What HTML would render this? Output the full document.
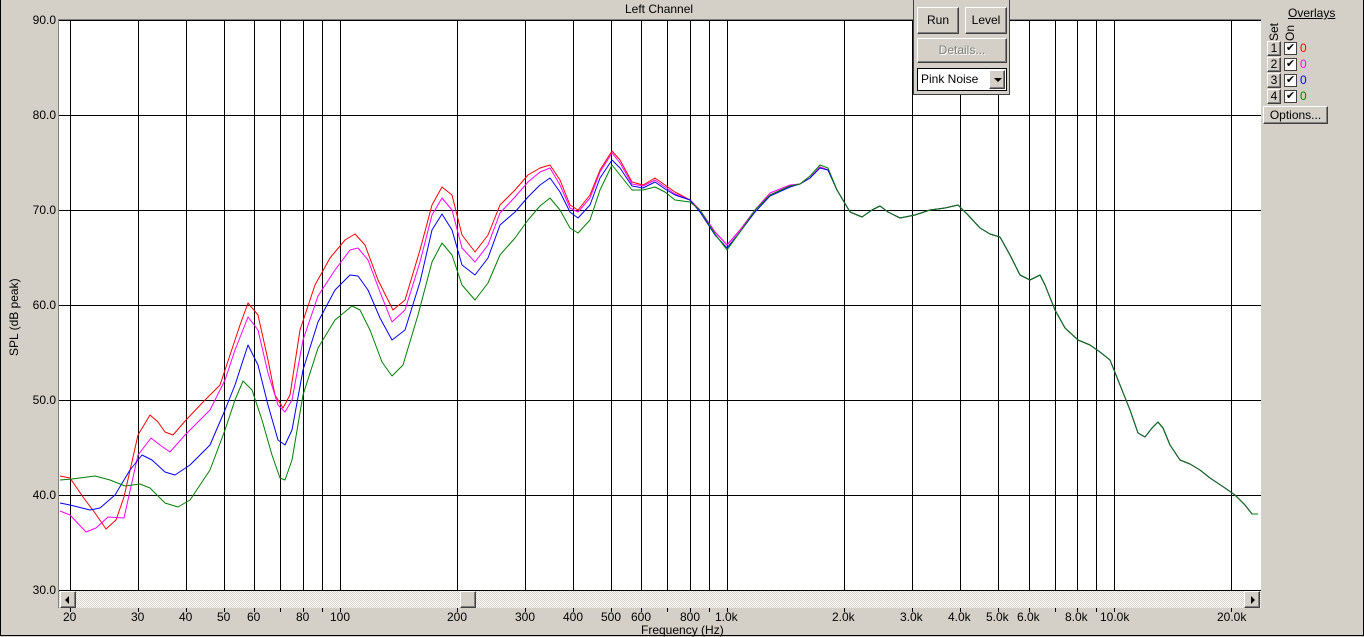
<!DOCTYPE html>
<html><head><meta charset="utf-8"><style>
html,body{margin:0;padding:0;}
body{width:1364px;height:637px;background:#d4d0c8;position:relative;overflow:hidden;font-family:"Liberation Sans",Arial,sans-serif;font-size:12px;color:#000;}
.a{position:absolute;}
.btn{position:absolute;background:#d4d0c8;border:1px solid;border-color:#fff #404040 #404040 #fff;box-shadow:inset -1px -1px 0 #808080;text-align:center;box-sizing:border-box;}
</style></head><body>
<div class="a" style="left:0;top:0;width:1362px;height:635px;border-right:1px solid #000;border-bottom:1px solid #000;border-left:1px solid #000;"></div>
<div class="a" style="left:625px;top:2px;">Left Channel</div>
<svg class="a" style="left:0;top:0" width="1364" height="637">
<rect x="59" y="20" width="1202" height="571" fill="#fff"/>
<line x1="58.5" y1="19" x2="58.5" y2="608" stroke="#808080"/>
<line x1="58" y1="19.5" x2="1261" y2="19.5" stroke="#808080"/>
<g stroke="#000" stroke-width="1" shape-rendering="crispEdges">
<line x1="59" y1="20.5" x2="1261" y2="20.5"/><line x1="59" y1="115.5" x2="1261" y2="115.5"/><line x1="59" y1="210.5" x2="1261" y2="210.5"/><line x1="59" y1="305.5" x2="1261" y2="305.5"/><line x1="59" y1="400.5" x2="1261" y2="400.5"/><line x1="59" y1="495.5" x2="1261" y2="495.5"/><line x1="59" y1="590.5" x2="1261" y2="590.5"/>
<g id="v">
<line x1="70.5" y1="20" x2="70.5" y2="590"/><line x1="138.5" y1="20" x2="138.5" y2="590"/><line x1="186.5" y1="20" x2="186.5" y2="590"/><line x1="224.5" y1="20" x2="224.5" y2="590"/><line x1="254.5" y1="20" x2="254.5" y2="590"/><line x1="280.5" y1="20" x2="280.5" y2="590"/><line x1="303.5" y1="20" x2="303.5" y2="590"/><line x1="322.5" y1="20" x2="322.5" y2="590"/><line x1="340.5" y1="20" x2="340.5" y2="590"/>
<line x1="457.5" y1="20" x2="457.5" y2="590"/><line x1="525.5" y1="20" x2="525.5" y2="590"/><line x1="573.5" y1="20" x2="573.5" y2="590"/><line x1="611.5" y1="20" x2="611.5" y2="590"/><line x1="641.5" y1="20" x2="641.5" y2="590"/><line x1="667.5" y1="20" x2="667.5" y2="590"/><line x1="690.5" y1="20" x2="690.5" y2="590"/><line x1="709.5" y1="20" x2="709.5" y2="590"/><line x1="727.5" y1="20" x2="727.5" y2="590"/>
<line x1="844.5" y1="20" x2="844.5" y2="590"/><line x1="912.5" y1="20" x2="912.5" y2="590"/><line x1="960.5" y1="20" x2="960.5" y2="590"/><line x1="998.5" y1="20" x2="998.5" y2="590"/><line x1="1029.5" y1="20" x2="1029.5" y2="590"/><line x1="1055.5" y1="20" x2="1055.5" y2="590"/><line x1="1077.5" y1="20" x2="1077.5" y2="590"/><line x1="1096.5" y1="20" x2="1096.5" y2="590"/><line x1="1114.5" y1="20" x2="1114.5" y2="590"/><line x1="1231.5" y1="20" x2="1231.5" y2="590"/>
</g>
<g transform="translate(0,588)" stroke="#000">
<line x1="70.5" y1="20" x2="70.5" y2="24"/><line x1="138.5" y1="20" x2="138.5" y2="24"/><line x1="186.5" y1="20" x2="186.5" y2="24"/><line x1="224.5" y1="20" x2="224.5" y2="24"/><line x1="254.5" y1="20" x2="254.5" y2="24"/><line x1="280.5" y1="20" x2="280.5" y2="24"/><line x1="303.5" y1="20" x2="303.5" y2="24"/><line x1="322.5" y1="20" x2="322.5" y2="24"/><line x1="340.5" y1="20" x2="340.5" y2="24"/><line x1="457.5" y1="20" x2="457.5" y2="24"/><line x1="525.5" y1="20" x2="525.5" y2="24"/><line x1="573.5" y1="20" x2="573.5" y2="24"/><line x1="611.5" y1="20" x2="611.5" y2="24"/><line x1="641.5" y1="20" x2="641.5" y2="24"/><line x1="667.5" y1="20" x2="667.5" y2="24"/><line x1="690.5" y1="20" x2="690.5" y2="24"/><line x1="709.5" y1="20" x2="709.5" y2="24"/><line x1="727.5" y1="20" x2="727.5" y2="24"/><line x1="844.5" y1="20" x2="844.5" y2="24"/><line x1="912.5" y1="20" x2="912.5" y2="24"/><line x1="960.5" y1="20" x2="960.5" y2="24"/><line x1="998.5" y1="20" x2="998.5" y2="24"/><line x1="1029.5" y1="20" x2="1029.5" y2="24"/><line x1="1055.5" y1="20" x2="1055.5" y2="24"/><line x1="1077.5" y1="20" x2="1077.5" y2="24"/><line x1="1096.5" y1="20" x2="1096.5" y2="24"/><line x1="1114.5" y1="20" x2="1114.5" y2="24"/><line x1="1231.5" y1="20" x2="1231.5" y2="24"/>
</g>
</g>
<g fill="none" stroke-width="1" stroke-linejoin="round">
<polyline stroke="#ff0000" points="60,476 70,478 83,497 95,513 106,529 116,520 124,497 138,435 150,415 158,422 165,432 173,435 186,420 205,400 220,385 230,355 240,325 248,303 258,315 268,360 275,395 283,408 290,395 300,330 315,285 330,258 345,240 355,234 365,245 378,280 393,310 405,300 420,250 432,205 442,187 452,195 462,235 475,252 488,235 500,205 515,190 528,175 540,168 550,165 560,180 570,205 578,210 590,195 600,170 612,151 620,160 632,182 643,185 655,178 665,185 675,192 690,200 700,210 715,232 727,245 740,230 755,210 770,195 790,186 800,184 810,178 820,167 828,170 837,190 850,212 862,217 872,210 880,206 888,212 900,218 915,215 930,210 945,208 958,205 968,215 980,228 990,234 1000,237 1010,255 1020,275 1030,280 1040,275 1045,285 1055,310 1065,328 1078,340 1090,345 1100,352 1110,360 1120,385 1130,410 1138,433 1145,437 1152,428 1158,422 1163,428 1170,445 1180,460 1190,464 1200,470 1210,478 1225,488 1235,495 1245,505 1252,514 1258,514"/>
<polyline stroke="#ff00ff" points="60,511 70,515 86,532 96,528 108,517 124,518 138,455 151,438 160,445 170,452 185,435 210,410 225,380 235,350 248,317 258,330 268,373 278,405 285,412 292,400 303,340 318,296 335,270 350,250 358,248 368,260 380,292 392,322 405,310 420,262 432,215 442,198 452,210 462,248 475,262 488,245 500,213 515,197 528,182 540,172 550,168 560,185 570,208 578,212 590,198 600,172 612,153 620,163 632,184 643,186 655,180 665,187 675,194 690,200 700,210 715,232 727,245 740,230 755,210 770,193 790,185 800,184 810,178 820,167 828,170 837,190 850,212 862,217 872,210 880,206 888,212 900,218 915,215 930,210 945,208 958,205 968,215 980,228 990,234 1000,237 1010,255 1020,275 1030,280 1040,275 1045,285 1055,310 1065,328 1078,340 1090,345 1100,352 1110,360 1120,385 1130,410 1138,433 1145,437 1152,428 1158,422 1163,428 1170,445 1180,460 1190,464 1200,470 1210,478 1225,488 1235,495 1245,505 1252,514 1258,514"/>
<polyline stroke="#0000ff" points="60,503 70,505 90,510 100,508 115,495 130,470 142,455 152,460 165,472 175,475 190,465 210,445 225,410 235,385 248,345 258,365 268,405 278,440 285,445 292,430 303,370 318,322 335,290 350,275 358,276 368,290 380,318 392,340 405,330 420,282 432,230 442,214 452,230 462,265 475,275 488,258 500,225 515,212 528,197 540,185 550,178 560,192 570,212 578,218 590,205 600,178 612,160 620,168 632,186 643,188 655,182 665,189 675,195 690,200 700,212 715,235 727,248 740,232 755,212 770,196 790,187 800,184 810,178 820,168 828,170 837,190 850,212 862,217 872,210 880,206 888,212 900,218 915,215 930,210 945,208 958,205 968,215 980,228 990,234 1000,237 1010,255 1020,275 1030,280 1040,275 1045,285 1055,310 1065,328 1078,340 1090,345 1100,352 1110,360 1120,385 1130,410 1138,433 1145,437 1152,428 1158,422 1163,428 1170,445 1180,460 1190,464 1200,470 1210,478 1225,488 1235,495 1245,505 1252,514 1258,514"/>
<polyline stroke="#008000" points="60,480 72,479 95,476 110,480 125,486 140,484 150,488 165,503 178,507 190,500 210,470 225,430 235,400 243,381 252,390 262,420 272,455 280,478 285,480 292,460 303,395 318,348 335,320 352,306 360,310 370,330 382,362 392,376 403,365 418,315 432,262 442,243 452,255 462,285 475,300 488,283 500,255 515,238 528,220 540,206 550,198 560,210 570,228 578,233 590,220 600,190 612,165 620,175 632,190 643,190 655,187 665,192 675,200 690,202 700,210 715,234 727,250 740,232 755,210 770,195 790,186 800,184 810,176 820,165 828,168 837,190 850,212 862,217 872,210 880,206 888,212 900,218 915,215 930,210 945,208 958,205 968,215 980,228 990,234 1000,237 1010,255 1020,275 1030,280 1040,275 1045,285 1055,310 1065,328 1078,340 1090,345 1100,352 1110,360 1120,385 1130,410 1138,433 1145,437 1152,428 1158,422 1163,428 1170,445 1180,460 1190,464 1200,470 1210,478 1225,488 1235,495 1245,505 1252,514 1258,514"/>
</g>
<defs><pattern id="h" width="2" height="2" patternUnits="userSpaceOnUse"><rect width="2" height="2" fill="#fff"/><rect width="1" height="1" fill="#d4d0c8"/><rect x="1" y="1" width="1" height="1" fill="#d4d0c8"/></pattern></defs>
<rect x="59" y="591" width="1202" height="17" fill="url(#h)"/>
</svg>
<div class="btn" style="left:60px;top:591px;width:16px;height:17px;"></div>
<div class="a" style="left:65px;top:596px;width:0;height:0;border-top:4px solid transparent;border-bottom:4px solid transparent;border-right:4px solid #000;"></div>
<div class="btn" style="left:460px;top:591px;width:16px;height:17px;"></div>
<div class="btn" style="left:1244px;top:591px;width:16px;height:17px;"></div>
<div class="a" style="left:1251px;top:596px;width:0;height:0;border-top:4px solid transparent;border-bottom:4px solid transparent;border-left:4px solid #000;"></div>
<div class="a" style="right:1308px;top:13px;">90.0</div>
<div class="a" style="right:1308px;top:108px;">80.0</div>
<div class="a" style="right:1308px;top:203px;">70.0</div>
<div class="a" style="right:1308px;top:298px;">60.0</div>
<div class="a" style="right:1308px;top:393px;">50.0</div>
<div class="a" style="right:1308px;top:488px;">40.0</div>
<div class="a" style="right:1308px;top:583px;">30.0</div>
<div class="a" style="left:7px;top:356px;transform:rotate(-90deg);transform-origin:0 0;white-space:nowrap;">SPL (dB peak)</div>
<div class="a" style="top:610px;left:0;width:1364px;height:16px;">
<span class="a" style="left:63px">20</span><span class="a" style="left:131px">30</span><span class="a" style="left:179px">40</span><span class="a" style="left:217px">50</span><span class="a" style="left:247px">60</span><span class="a" style="left:296px">80</span><span class="a" style="left:330px">100</span><span class="a" style="left:447px">200</span><span class="a" style="left:515px">300</span><span class="a" style="left:563px">400</span><span class="a" style="left:601px">500</span><span class="a" style="left:631px">600</span><span class="a" style="left:680px">800</span><span class="a" style="left:715px">1.0k</span><span class="a" style="left:832px">2.0k</span><span class="a" style="left:900px">3.0k</span><span class="a" style="left:948px">4.0k</span><span class="a" style="left:986px">5.0k</span><span class="a" style="left:1017px">6.0k</span><span class="a" style="left:1065px">8.0k</span><span class="a" style="left:1100px">10.0k</span><span class="a" style="left:1217px">20.0k</span>
</div>
<div class="a" style="left:641px;top:623px;">Frequency (Hz)</div>
<div class="a" style="left:913px;top:0;width:97px;height:95px;background:#d4d0c8;border:1px solid #404040;border-top:none;box-sizing:border-box;"></div>
<div class="btn" style="left:917px;top:7px;width:42px;height:27px;line-height:25px;">Run</div>
<div class="btn" style="left:965px;top:7px;width:42px;height:27px;line-height:25px;">Level</div>
<div class="btn" style="left:917px;top:38px;width:90px;height:25px;line-height:23px;color:#808080;text-shadow:1px 1px 0 #fff;">Details...</div>
<div class="a" style="left:917px;top:68px;width:90px;height:23px;background:#fff;border:1px solid #000;box-sizing:border-box;"></div>
<div class="a" style="left:921px;top:72px;">Pink Noise</div>
<div class="btn" style="left:989px;top:70px;width:16px;height:19px;"></div>
<div class="a" style="left:994px;top:78px;width:0;height:0;border-left:4px solid transparent;border-right:4px solid transparent;border-top:4px solid #000;"></div>
<div class="a" style="left:1288px;top:6px;text-decoration:underline;">Overlays</div>
<div class="a" style="left:1268px;top:41px;transform:rotate(-90deg);transform-origin:0 0;line-height:12px;">Set</div>
<div class="a" style="left:1284px;top:41px;transform:rotate(-90deg);transform-origin:0 0;line-height:12px;">On</div>
<div class="btn" style="left:1267px;top:41px;width:14px;height:15px;line-height:13px;">1</div>
<div class="btn" style="left:1267px;top:57px;width:14px;height:15px;line-height:13px;">2</div>
<div class="btn" style="left:1267px;top:73px;width:14px;height:15px;line-height:13px;">3</div>
<div class="btn" style="left:1267px;top:89px;width:14px;height:15px;line-height:13px;">4</div>
<div class="a" style="left:1284px;top:42px;width:13px;height:13px;background:#fff;border:1px solid #404040;box-sizing:border-box;font-size:11px;line-height:11px;text-align:center;">✔</div>
<div class="a" style="left:1284px;top:58px;width:13px;height:13px;background:#fff;border:1px solid #404040;box-sizing:border-box;font-size:11px;line-height:11px;text-align:center;">✔</div>
<div class="a" style="left:1284px;top:74px;width:13px;height:13px;background:#fff;border:1px solid #404040;box-sizing:border-box;font-size:11px;line-height:11px;text-align:center;">✔</div>
<div class="a" style="left:1284px;top:90px;width:13px;height:13px;background:#fff;border:1px solid #404040;box-sizing:border-box;font-size:11px;line-height:11px;text-align:center;">✔</div>
<div class="a" style="left:1300px;top:41px;color:#ff0000;">0</div>
<div class="a" style="left:1300px;top:57px;color:#ff00ff;">0</div>
<div class="a" style="left:1300px;top:73px;color:#0000ff;">0</div>
<div class="a" style="left:1300px;top:89px;color:#008000;">0</div>
<div class="btn" style="left:1263px;top:106px;width:65px;height:18px;line-height:16px;">Options...</div>
</body></html>
